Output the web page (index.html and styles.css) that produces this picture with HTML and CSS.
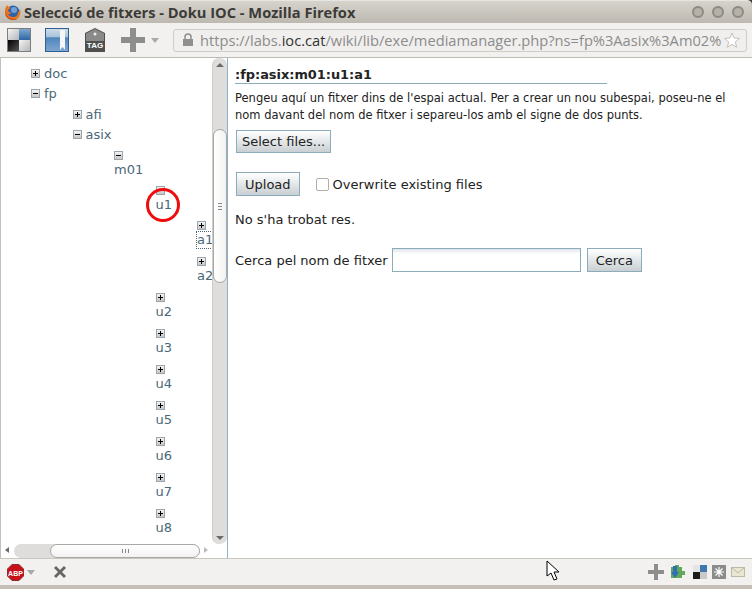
FILE: index.html
```html
<!DOCTYPE html>
<html>

<head>
    <meta charset="utf-8">
    <title>Selecció de fitxers - Doku IOC - Mozilla Firefox</title>
    <link rel="stylesheet" href="styles.css">
</head>

<body>
    <div class="titlebar">
        <svg class="fox" width="17" height="17" viewBox="0 0 17 17">
            <circle cx="9" cy="8" r="6.500" fill="#2f62a8" />
            <circle cx="10" cy="6" r="3" fill="#6fa0d8" />
            <path d="M3 1C1 4 0 8 2 12c2 4 8 5 11 3 3-2 4-6 3-10-.5 2-1 3-2 3 0 3-2 5-5 5-2 0-4-1-5-3 1 0 3 0 3-1S4 8 4 6c1-1 2-2 3-2-1-1-3-1-4-3z" fill="#e8761c" />
            <path d="M2 12c2 4 8 5 11 3-3 0-7 0-9-2-1-1-2-3-2-5-.5 1-.5 3 0 4z" fill="#c9461a" />
        </svg>
        <span class="title">Selecció de fitxers - Doku IOC - Mozilla Firefox</span>
        <div class="winbtns">
            <span class="winbtn"></span>
            <span class="winbtn"></span>
            <span class="winbtn"></span>
        </div>
    </div>

    <div class="toolbar">
        <svg class="tool" width="24" height="24" viewBox="0 0 24 24">
            <defs>
                <linearGradient id="g1" x1="0" y1="0" x2="1" y2="1">
                    <stop offset="0" stop-color="#f4f4f4" />
                    <stop offset="1" stop-color="#b4b6b8" />
                </linearGradient>
                <linearGradient id="g2" x1="0" y1="0" x2="0" y2="1">
                    <stop offset="0" stop-color="#7fa8d0" />
                    <stop offset="1" stop-color="#2c66a4" />
                </linearGradient>
                <linearGradient id="g3" x1="0" y1="0" x2="1" y2="1">
                    <stop offset="0" stop-color="#000" />
                    <stop offset="1" stop-color="#555" />
                </linearGradient>
                <linearGradient id="g4" x1="0" y1="0" x2="0" y2="1">
                    <stop offset="0" stop-color="#cfdce8" />
                    <stop offset=".35" stop-color="#a9c2da" />
                    <stop offset=".4" stop-color="#4f86bd" />
                    <stop offset="1" stop-color="#7ea6cf" />
                </linearGradient>
            </defs>
            <rect width="24" height="24" fill="#7d7d7d" />
            <rect x="1" y="1" width="11" height="11" fill="url(#g1)" />
            <rect x="12" y="1" width="11" height="11" fill="url(#g2)" />
            <rect x="1" y="12" width="11" height="11" fill="url(#g3)" />
            <rect x="12" y="12" width="11" height="11" fill="url(#g1)" />
        </svg>
        <svg class="tool t2" width="24" height="24" viewBox="0 0 24 24">
            <rect width="24" height="24" fill="#2f5f93" />
            <rect x="1" y="1" width="22" height="22" fill="url(#g4)" />
            <path d="M15 2h5v20l-2.500-3-2.500 3z" fill="#f4f6f8" />
        </svg>
        <svg class="tool t3" width="20" height="24" viewBox="0 0 20 24">
            <path d="M10 0l10 5v19H0V5z" fill="#4f4f4f" />
            <path d="M10 1l9 4.500V13H1V5.500z" fill="#8a8a8a" />
            <circle cx="10" cy="6" r="1.500" fill="#eee" />
            <text x="10" y="20" class="tagtext">TAG</text>
        </svg>
        <svg class="tool t4" width="24" height="24" viewBox="0 0 24 24">
            <path d="M9 0h6v9h9v6h-9v9H9v-9H0V9h9z" fill="#8d8d8b" />
        </svg>
        <span class="arrow"></span>
        <div class="urlbar">
            <svg width="12" height="14" viewBox="0 0 12 14">
                <path d="M3 6V4a3 3 0 016 0v2" fill="none" stroke="#8f8f8f" stroke-width="1.500" />
                <rect x="1" y="6" width="10" height="7" fill="#8f8f8f" />
            </svg>
            <span class="url">https://labs.<b>ioc.cat</b>/wiki/lib/exe/mediamanager.php?ns=fp%3Aasix%3Am02%</span>
            <svg class="star" width="16" height="16" viewBox="0 0 16 16">
                <path d="M8 1l2 5 5.500.4-4.200 3.500 1.400 5.400L8 12.400l-4.700 2.900 1.400-5.400L.5 6.400 6 6z" fill="#fff" stroke="#c4c2bc" />
            </svg>
        </div>
    </div>

    <div class="main">
        <div class="side">
            <div class="sidetop">
                <div class="tree">
                    <ul class="root">
                        <li>
                            <div class="node"><span class="box plus"></span><a>doc</a></div>
                        </li>
                        <li>
                            <div class="node"><span class="box"></span><a>fp</a></div>
                            <ul>
                                <li>
                                    <div class="node"><span class="box plus"></span><a>afi</a></div>
                                </li>
                                <li>
                                    <div class="node"><span class="box"></span><a>asix</a></div>
                                    <ul>
                                        <li>
                                            <div class="node stack short"><span class="box"></span><a>m01</a></div>
                                            <ul>
                                                <li>
                                                    <div class="node stack short"><span class="box"></span><a>u1</a></div>
                                                    <ul>
                                                        <li>
                                                            <div class="node stack"><span class="box plus"></span><a class="cur">a1</a></div>
                                                        </li>
                                                        <li>
                                                            <div class="node stack"><span class="box plus"></span><a>a2</a></div>
                                                        </li>
                                                    </ul>
                                                </li>
                                                <li>
                                                    <div class="node stack"><span class="box plus"></span><a>u2</a></div>
                                                </li>
                                                <li>
                                                    <div class="node stack"><span class="box plus"></span><a>u3</a></div>
                                                </li>
                                                <li>
                                                    <div class="node stack"><span class="box plus"></span><a>u4</a></div>
                                                </li>
                                                <li>
                                                    <div class="node stack"><span class="box plus"></span><a>u5</a></div>
                                                </li>
                                                <li>
                                                    <div class="node stack"><span class="box plus"></span><a>u6</a></div>
                                                </li>
                                                <li>
                                                    <div class="node stack"><span class="box plus"></span><a>u7</a></div>
                                                </li>
                                                <li>
                                                    <div class="node stack"><span class="box plus"></span><a>u8</a></div>
                                                </li>
                                            </ul>
                                        </li>
                                    </ul>
                                </li>
                            </ul>
                        </li>
                    </ul>
                </div>
                <div class="vscroll">
                    <span class="vup"></span>
                    <div class="vtrack">
                        <div class="vthumb"><span class="grip"></span></div>
                    </div>
                    <span class="vdown"></span>
                </div>
            </div>
            <div class="hscroll">
                <span class="hleft"></span>
                <div class="htrack">
                    <div class="hthumb"><span class="hgrip"></span></div>
                </div>
                <span class="hright"></span>
            </div>
        </div>

        <div class="content">
            <h1>:fp:asix:m01:u1:a1</h1>
            <p class="info">Pengeu aquí un fitxer dins de l'espai actual. Per a crear un nou subespai, poseu-ne el nom davant del nom de fitxer i separeu-los amb el signe de dos punts.</p>
            <button class="btn select">Select files...</button>
            <div class="uprow">
                <button class="btn">Upload</button>
                <label class="over"><span class="check"></span>Overwrite existing files</label>
            </div>
            <p class="none">No s'ha trobat res.</p>
            <div class="search">
                <label>Cerca pel nom de fitxer</label>
                <input class="q" type="text">
                <button class="btn">Cerca</button>
            </div>
        </div>
    </div>

    <div class="statusbar">
        <svg width="17" height="17" viewBox="0 0 17 17">
            <path d="M5 .5h7L16.500 5v7L12 16.500H5L.5 12V5z" fill="#c8121a" stroke="#8e2a2a" />
            <text x="8.500" y="11.500" class="abp">ABP</text>
        </svg>
        <span class="arrow small"></span>
        <svg class="closex" width="14" height="14" viewBox="0 0 14 14">
            <path d="M3 1l4 4 4-4 2 2-4 4 4 4-2 2-4-4-4 4-2-2 4-4-4-4z" fill="#666" />
        </svg>
        <div class="addons">
            <svg width="16" height="16" viewBox="0 0 16 16">
                <path d="M6 0h4v6h6v4h-6v6H6v-6H0V6h6z" fill="#8d8d8b" />
            </svg>
            <svg class="puzzle" width="15" height="16" viewBox="0 0 15 16">
                <path d="M1 3h4V1h4v2h3v4h3v4h-3v3H1z" fill="#63a85a" />
                <path d="M3 2h4v6h2l-4 6-4-6h2z" fill="#2f6fb5" />
            </svg>
            <svg class="win" width="14" height="14" viewBox="0 0 14 14">
                <rect width="7" height="7" fill="#e4e4e4" />
                <rect x="7" width="7" height="7" fill="#3f78ad" />
                <rect y="7" width="7" height="7" fill="#1c1c1c" />
                <rect x="7" y="7" width="7" height="7" fill="#c9c9c9" />
            </svg>
            <svg width="14" height="14" viewBox="0 0 14 14">
                <rect width="14" height="14" fill="#8b8b89" />
                <path d="M7 2v10M2 7h10M3.500 3.500l7 7M10.500 3.500l-7 7" stroke="#fff" stroke-width="1.200" />
            </svg>
            <svg width="14" height="10" viewBox="0 0 14 10">
                <rect x=".5" y=".5" width="13" height="9" fill="#e9e6d2" stroke="#bcb9a6" />
                <path d="M1 1l6 5 6-5" fill="none" stroke="#bcb9a6" />
            </svg>
        </div>
    </div>
    <div class="bottomedge"></div>

    <span class="ring"></span>
    <svg class="cursor" width="14" height="21" viewBox="0 0 14 21">
        <path d="M1 1v15l4-3 3 7 3-1-3-7h5z" fill="#fff" stroke="#000" />
    </svg>
</body>

</html>
```

FILE: styles.css
```css
html,
body {
    margin: 0;
    padding: 0;
    height: 589px;
    overflow: hidden;
}

body {
    font-family: "DejaVu Sans", sans-serif;
    font-size: 12px;
    color: #222;
    background-color: #3c3b37;
    position: relative;
}

.titlebar {
    height: 23px;
    box-sizing: border-box;
    display: flex;
    align-items: center;
    padding-left: 4px;
    background: linear-gradient(#d6d3cc, #bdb9b1);
    border-top: 1px solid #e8e6e2;
    border-top-right-radius: 5px;
}

.fox {
    margin-right: 3px;
}

.title {
    font-family: "Open Sans", sans-serif;
    font-weight: bold;
    font-size: 14.65px;
    color: #3c3b37;
}

.winbtns {
    margin-left: auto;
    margin-right: 8px;
    display: flex;
    gap: 8px;
}

.winbtn {
    width: 8px;
    height: 8px;
    border: 2px solid #8d8a83;
    border-radius: 50%;
    background-color: #b5b1a9;
}

.toolbar {
    height: 35px;
    box-sizing: border-box;
    display: flex;
    align-items: center;
    padding: 0 5px 0 7px;
    background-color: #f2f1f0;
    border-bottom: 1px solid #bdbab4;
}

.t2 {
    margin-left: 14px;
}

.t3 {
    margin-left: 16px;
}

.t4 {
    margin-left: 16px;
}

.tagtext {
    font-family: "Liberation Sans", sans-serif;
    font-weight: bold;
    font-size: 8px;
    fill: #fff;
    text-anchor: middle;
}

.arrow {
    width: 0;
    height: 0;
    margin-left: 6px;
    border-left: 4px solid transparent;
    border-right: 4px solid transparent;
    border-top: 5px solid #a9a9a7;
}

.urlbar {
    width: 574px;
    height: 23px;
    box-sizing: border-box;
    margin-left: 14px;
    padding: 0 6px 0 8px;
    display: flex;
    align-items: center;
    background-color: #f0efed;
    border: 1px solid #cfccc6;
    border-radius: 3px;
}

.url {
    flex: 1;
    margin-left: 6px;
    font-family: "Open Sans", sans-serif;
    font-size: 14.67px;
    color: #8c8c8c;
    white-space: nowrap;
    overflow: hidden;
}

.url b {
    font-weight: normal;
    color: #333;
}

.star {
    margin-left: 3px;
}

.main {
    height: 500px;
    display: flex;
    background-color: #fff;
}

.side {
    width: 228px;
    box-sizing: border-box;
    border-right: 1px solid #8cb2c9;
    border-left: 1px solid #c4c0b8;
    display: flex;
    flex-direction: column;
}

.sidetop {
    flex: 1;
    display: flex;
    min-height: 0;
}

.tree {
    width: 212px;
    overflow: hidden;
    padding-top: 5px;
}

.tree ul {
    list-style: none;
    margin: 0;
    padding: 0 0 0 41.5px;
}

.tree .root {
    padding-left: 30px;
}

.node {
    display: flex;
    align-items: center;
    height: 20.5px;
    gap: 4px;
    font-size: 13px;
    white-space: nowrap;
}

.node.stack {
    flex-direction: column;
    align-items: flex-start;
    justify-content: flex-start;
    gap: 2px;
    height: 36px;
    padding-top: 6px;
    box-sizing: border-box;
    line-height: 16px;
}

.node.stack.short {
    height: 35px;
}

.node a {
    color: #4a6878;
}

.node a.cur {
    outline: 1px dotted #436976;
    padding-right: 3px;
}

.box {
    width: 7px;
    height: 7px;
    display: block;
    position: relative;
    flex: none;
    background: linear-gradient(#f4f4f4, #c6c6c6);
    border: 1px solid #9aa5ad;
}

.box::before {
    content: "";
    position: absolute;
    left: 1px;
    top: 3px;
    width: 5px;
    height: 1px;
    background-color: #000;
}

.box.plus::after {
    content: "";
    position: absolute;
    left: 3px;
    top: 1px;
    width: 1px;
    height: 5px;
    background-color: #000;
}

.vscroll {
    width: 14px;
    display: flex;
    flex-direction: column;
    background-color: #dfdddb;
    border-left: 1px solid #cfcdca;
    border-radius: 7px;
}

.vup,
.vdown {
    height: 13px;
    display: block;
    flex: none;
    position: relative;
}

.vup::after,
.vdown::after {
    content: "";
    position: absolute;
    left: 3px;
    top: 5px;
    border-left: 4px solid transparent;
    border-right: 4px solid transparent;
}

.vup::after {
    border-bottom: 4px solid #6b6b6b;
}

.vdown::after {
    border-top: 4px solid #6b6b6b;
}

.vtrack {
    flex: 1;
    padding-top: 58px;
    min-height: 0;
}

.vthumb {
    height: 154px;
    box-sizing: border-box;
    background: linear-gradient(90deg, #fff, #f3f2f1);
    border: 1px solid #aaa8a5;
    border-radius: 7px;
    display: flex;
    align-items: center;
    justify-content: center;
}

.grip {
    width: 4px;
    height: 7px;
    background: repeating-linear-gradient(#888 0 1px, transparent 1px 3px);
}

.hscroll {
    height: 14px;
    flex: none;
    display: flex;
    align-items: center;
    background-color: #fff;
    box-sizing: border-box;
    padding-right: 14px;
}

.hleft,
.hright {
    width: 13px;
    flex: none;
    height: 100%;
    position: relative;
}

.hleft::after,
.hright::after {
    content: "";
    position: absolute;
    top: 3px;
    left: 4px;
    border-top: 3.500px solid transparent;
    border-bottom: 3.500px solid transparent;
}

.hleft::after {
    border-right: 4px solid #6b6b6b;
}

.hright::after {
    border-left: 4px solid #bbb;
}

.htrack {
    flex: 1;
    height: 100%;
    background-color: #dfdddb;
    border-radius: 7px;
    padding-left: 36px;
}

.hthumb {
    height: 100%;
    box-sizing: border-box;
    background: linear-gradient(#fff, #f3f2f1);
    border: 1px solid #aaa8a5;
    border-radius: 7px;
    display: flex;
    align-items: center;
    justify-content: center;
}

.hgrip {
    width: 7px;
    height: 4px;
    background: repeating-linear-gradient(90deg, #888 0 1px, transparent 1px 3px);
}

.content {
    flex: 1;
    padding: 9px 7px 0 7px;
    min-width: 0;
}

h1 {
    width: 372px;
    margin: 0 0 6px 0;
    font-size: 12.9px;
    line-height: 15px;
    font-weight: bold;
    color: #222;
    border-bottom: 1px solid #8cacbb;
    padding-bottom: 1px;
}

.info {
    margin: 0 0 6px 0;
    line-height: 17px;
    font-size: 11.5px;
}

.btn {
    height: 24px;
    box-sizing: border-box;
    padding: 0 8px;
    font-family: "DejaVu Sans", sans-serif;
    font-size: 13px;
    color: #222;
    background: linear-gradient(#fff, #c9cfd3);
    border: 1px solid #8cacbb;
    display: block;
}

.btn.select {
    height: 23px;
    padding: 0 5px;
    margin-left: 1px;
}

.uprow {
    display: flex;
    align-items: center;
    margin-top: 19px;
    margin-left: 1px;
}

.over {
    display: flex;
    align-items: center;
    margin-left: 16px;
    font-size: 13px;
}

.check {
    width: 11px;
    height: 11px;
    margin-right: 4px;
    background-color: #fff;
    border: 1px solid #b0aeaa;
    border-radius: 2px;
}

.none {
    margin: 16px 0 0 0;
    font-size: 13px;
    line-height: 16px;
}

.search {
    display: flex;
    align-items: center;
    margin-top: 20px;
    font-size: 13px;
}

.q {
    width: 189px;
    height: 24px;
    box-sizing: border-box;
    margin: 0 6px 0 4px;
    background: linear-gradient(#dfe6ea, #fff 5px);
    border: 1px solid #8cacbb;
}

.statusbar {
    height: 27px;
    box-sizing: border-box;
    display: flex;
    align-items: center;
    padding: 0 7px;
    background-color: #f2f1f0;
    border-top: 1px solid #c9c6c0;
}

.abp {
    font-family: "Liberation Sans", sans-serif;
    font-weight: bold;
    font-size: 7px;
    fill: #fff;
    text-anchor: middle;
}

.arrow.small {
    margin-left: 3px;
}

.closex {
    margin-left: 18px;
}

.addons {
    margin-left: auto;
    display: flex;
    align-items: center;
    gap: 5px;
}

.puzzle {
    margin-left: 1px;
}

.win {
    margin-left: 3px;
}

.bottomedge {
    height: 4px;
    background-color: #c4c0b8;
}

/* annotation drawn over the screenshot */
.ring {
    position: absolute;
    left: 146px;
    top: 188px;
    width: 28px;
    height: 28px;
    border: 3px solid #ee0c0c;
    border-radius: 50%;
}

.cursor {
    position: absolute;
    left: 546px;
    top: 560px;
}
```
